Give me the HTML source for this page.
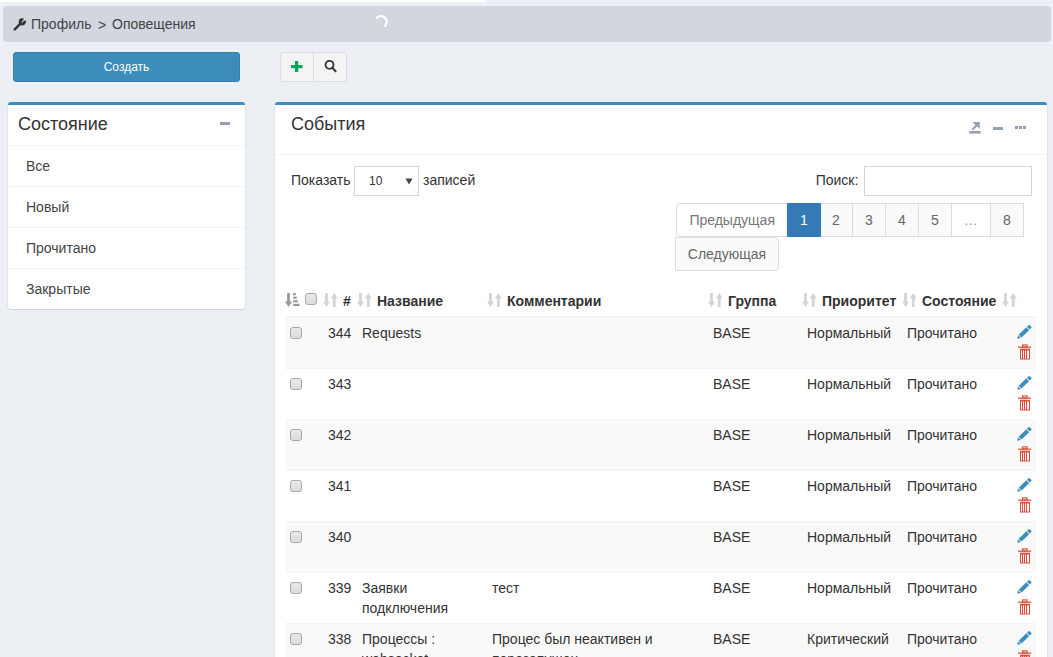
<!DOCTYPE html>
<html><head><meta charset="utf-8">
<style>
*{box-sizing:border-box;margin:0;padding:0}
html,body{width:1053px;height:657px;overflow:hidden;background:#ecf0f5;font-family:"Liberation Sans",sans-serif;font-size:14px;line-height:20px;color:#333}
.abs{position:absolute}
#topbar{left:0;top:0;width:485px;height:2px;background:#fff}
#bc{left:3px;top:6px;width:1048px;height:36px;background:#d2d6de;border-radius:4px}
#bc .t{left:28px;top:9px;color:#444;white-space:pre}
#create{left:13px;top:52px;width:227px;height:30px;background:#3c8dbc;border:1px solid #367fa9;border-radius:3px;color:#fff;font-size:12px;line-height:28px;text-align:center}
#grp{left:280px;top:52px;width:66px;height:30px}
#grp .b{position:absolute;top:0;height:30px;background:#f4f4f4;border:1px solid #ddd}
.box{background:#fff;border-top:3px solid #3c8dbc;border-radius:3px;box-shadow:0 1px 1px rgba(0,0,0,.1),1px 0 1px rgba(0,0,0,.04),-1px 0 1px rgba(0,0,0,.04)}
#lbox{left:8px;top:102px;width:237px;height:207px}
#lbox .hdr{position:absolute;left:0;top:0;width:237px;height:41px;border-bottom:1px solid #f4f4f4}
.ttl{position:absolute;font-size:18px;line-height:20px;color:#333}
#lbox .it{position:absolute;left:0;width:237px;height:41px;border-bottom:1px solid #f4f4f4;color:#444;padding:10px 0 0 18px}
#rbox{left:275px;top:102px;width:772px;height:600px}
.sep{position:absolute;height:1px;background:#f4f4f4}
.pg{position:absolute;top:203px;height:34px;border:1px solid #ddd;background:#fafafa;color:#666;text-align:center;line-height:32px}
th,td{position:absolute}
.row{position:absolute;left:285px;width:751px;height:51px;border-top:1px solid #f4f4f4}
.row.odd{background:#f9f9f9}
.cb{position:absolute;width:12px;height:12px;border:1px solid #a9a9a9;border-radius:3px;background:linear-gradient(#e9e9e9,#dcdcdc)}
.c{position:absolute;white-space:nowrap;color:#333}
.h{position:absolute;font-weight:bold;white-space:nowrap;color:#333}
</style></head><body>
<div id="topbar" class="abs"></div>
<div id="bc" class="abs">
  <svg class="abs" style="left:10px;top:12px" width="13" height="13" viewBox="0 0 13 13"><path d="M1.8 11.3 L7.2 5.9" stroke="#333" stroke-width="2.5" stroke-linecap="round"/><path d="M11.29 2.87 A2.2 2.2 0 1 1 10.23 1.81" stroke="#333" stroke-width="2.9" fill="none"/></svg>
  <div class="abs t" style="left:28px;top:8px">Профиль</div>
  <div class="abs t" style="left:95px;top:9px">&gt;</div>
  <div class="abs t" style="left:109px;top:8px">Оповещения</div>
  <svg class="abs" style="left:369px;top:4px" width="18" height="18" viewBox="0 0 18 18"><path d="M4.9 7.7 A5.8 5.8 0 0 1 13.1 15.9" stroke="#fff" stroke-width="2.2" fill="none" stroke-linecap="round"/></svg>
</div>
<div id="create" class="abs">Создать</div>
<div id="grp" class="abs">
  <div class="b" style="left:0;width:34px;border-radius:3px 0 0 3px"></div>
  <div class="b" style="left:33px;width:34px;border-radius:0 3px 3px 0"></div>
  <svg class="abs" style="left:11px;top:9px" width="12" height="12" viewBox="0 0 12 12"><path d="M0 5.6 H11.5 M5.6 0 V11" stroke="#00a65a" stroke-width="3.2"/></svg>
  <svg class="abs" style="left:43px;top:7px" width="14" height="14" viewBox="0 0 14 14"><circle cx="6.5" cy="5.8" r="4" stroke="#333" stroke-width="1.8" fill="none"/><path d="M9.3 8.8 L12.6 12.2" stroke="#333" stroke-width="2" stroke-linecap="round"/></svg>
</div>

<div id="lbox" class="abs box">
  <div class="hdr"></div>
  <div class="ttl" style="left:10px;top:9px">Состояние</div>
  <div class="abs" style="left:212px;top:17px;width:10px;height:3px;background:#97a0b3"></div>
  <div class="it" style="top:41px">Все</div>
  <div class="it" style="top:82px">Новый</div>
  <div class="it" style="top:123px">Прочитано</div>
  <div class="it" style="top:164px;border-bottom:0">Закрытые</div>
</div>

<div id="rbox" class="abs box">
  <div class="ttl" style="left:16px;top:9px">События</div>
  <svg class="abs" style="left:694px;top:17px" width="12" height="12" viewBox="0 0 12 12"><path d="M3.4 0 H10.8 V6.9 Z" fill="#97a0b3"/><path d="M7.5 3.5 L3.3 7.7" stroke="#97a0b3" stroke-width="2.2"/><rect x="0.3" y="9" width="11.4" height="2.6" fill="#97a0b3"/></svg>
  <div class="abs" style="left:718px;top:22px;width:10px;height:3px;background:#97a0b3"></div>
  <div class="abs" style="left:740px;top:21px;width:3px;height:3px;background:#97a0b3"></div>
  <div class="abs" style="left:744px;top:21px;width:3px;height:3px;background:#97a0b3"></div>
  <div class="abs" style="left:748px;top:21px;width:3px;height:3px;background:#97a0b3"></div>
  <div class="sep" style="left:0;top:49px;width:772px"></div>
</div>
<div class="abs c" style="left:291px;top:170px;color:#333">Показать</div>
<div class="abs" style="left:354px;top:166px;width:65px;height:30px;border:1px solid #d2d6de;background:#fff"></div>
<div class="abs c" style="left:369px;top:171px;font-size:12px">10</div>
<svg class="abs" style="left:405px;top:178px" width="8" height="7" viewBox="0 0 8 7"><path d="M0.5 0.5 H7.5 L4 6.5 Z" fill="#444"/></svg>
<div class="abs c" style="left:423px;top:170px">записей</div>
<div class="abs c" style="left:815.7px;top:170px">Поиск:</div>
<div class="abs" style="left:864px;top:166px;width:168px;height:30px;border:1px solid #d2d6de;background:#fff"></div>

<div class="pg" style="left:676.4px;width:111.6px;border-radius:4px 0 0 4px;background:#fff;color:#777">Предыдущая</div>
<div class="pg" style="left:787px;width:34px;background:#337ab7;border-color:#337ab7;color:#fff;z-index:2">1</div>
<div class="pg" style="left:819px;width:34px">2</div>
<div class="pg" style="left:852px;width:34px">3</div>
<div class="pg" style="left:885px;width:34px">4</div>
<div class="pg" style="left:918px;width:34px">5</div>
<div class="pg" style="left:950.5px;width:40.5px;background:#fff;color:#999">…</div>
<div class="pg" style="left:990px;width:34px">8</div>
<div class="pg" style="left:675px;top:237px;width:104px;border-radius:0 4px 4px 0">Следующая</div>

<svg class="abs" style="left:285px;top:293px" width="15" height="14" viewBox="0 0 15 14"><path d="M2.1 0 H4.9 V8.6 H7 L3.5 14 L0 8.6 H2.1 Z" fill="#999"/><rect x="8.2" y="0" width="2.6" height="2.2" fill="#999"/><rect x="8.2" y="3.6" width="3.6" height="2.2" fill="#999"/><rect x="8.2" y="7.2" width="4.6" height="2.2" fill="#999"/><rect x="8.2" y="10.8" width="6.3" height="2.2" fill="#999"/></svg>
<svg class="abs" style="left:323px;top:293px" width="15" height="14" viewBox="0 0 15 14"><path d="M2.1 0 H4.9 V8.6 H7 L3.5 14 L0 8.6 H2.1 Z M9.9 14 H12.7 V5.4 H14.8 L11.3 0 L7.8 5.4 H9.9 Z" fill="#d4d4d4"/></svg>
<svg class="abs" style="left:357px;top:293px" width="15" height="14" viewBox="0 0 15 14"><path d="M2.1 0 H4.9 V8.6 H7 L3.5 14 L0 8.6 H2.1 Z M9.9 14 H12.7 V5.4 H14.8 L11.3 0 L7.8 5.4 H9.9 Z" fill="#d4d4d4"/></svg>
<svg class="abs" style="left:487px;top:293px" width="15" height="14" viewBox="0 0 15 14"><path d="M2.1 0 H4.9 V8.6 H7 L3.5 14 L0 8.6 H2.1 Z M9.9 14 H12.7 V5.4 H14.8 L11.3 0 L7.8 5.4 H9.9 Z" fill="#d4d4d4"/></svg>
<svg class="abs" style="left:708px;top:293px" width="15" height="14" viewBox="0 0 15 14"><path d="M2.1 0 H4.9 V8.6 H7 L3.5 14 L0 8.6 H2.1 Z M9.9 14 H12.7 V5.4 H14.8 L11.3 0 L7.8 5.4 H9.9 Z" fill="#d4d4d4"/></svg>
<svg class="abs" style="left:802px;top:293px" width="15" height="14" viewBox="0 0 15 14"><path d="M2.1 0 H4.9 V8.6 H7 L3.5 14 L0 8.6 H2.1 Z M9.9 14 H12.7 V5.4 H14.8 L11.3 0 L7.8 5.4 H9.9 Z" fill="#d4d4d4"/></svg>
<svg class="abs" style="left:902px;top:293px" width="15" height="14" viewBox="0 0 15 14"><path d="M2.1 0 H4.9 V8.6 H7 L3.5 14 L0 8.6 H2.1 Z M9.9 14 H12.7 V5.4 H14.8 L11.3 0 L7.8 5.4 H9.9 Z" fill="#d4d4d4"/></svg>
<svg class="abs" style="left:1002px;top:293px" width="15" height="14" viewBox="0 0 15 14"><path d="M2.1 0 H4.9 V8.6 H7 L3.5 14 L0 8.6 H2.1 Z M9.9 14 H12.7 V5.4 H14.8 L11.3 0 L7.8 5.4 H9.9 Z" fill="#d4d4d4"/></svg>
<div class="cb" style="left:305px;top:293px"></div>
<div class="h" style="left:343px;top:291px">#</div>
<div class="h" style="left:377px;top:291px">Название</div>
<div class="h" style="left:507px;top:291px">Комментарии</div>
<div class="h" style="left:728px;top:291px">Группа</div>
<div class="h" style="left:822px;top:291px">Приоритет</div>
<div class="h" style="left:922px;top:291px">Состояние</div>
<div class="abs" style="left:285px;top:316px;width:751px;height:2px;background:#f4f4f4"></div>
<div class="abs" style="left:285px;top:318px;width:751px;height:50px;background:#f9f9f9;"></div>
<div class="cb" style="left:290px;top:327px"></div>
<div class="c" style="left:328px;top:323px">344</div>
<div class="c" style="left:362px;top:323px">Requests</div>
<div class="c" style="left:713px;top:323px">BASE</div>
<div class="c" style="left:807px;top:323px">Нормальный</div>
<div class="c" style="left:907px;top:323px">Прочитано</div>
<svg class="abs" style="left:1017px;top:324px" width="16" height="16" viewBox="0 0 16 16"><g transform="translate(0.3 14.8) rotate(-44)" fill="#3c8dbc"><path d="M0 0 L3.1 -2.0 V2.0 Z"/><rect x="3.9" y="-2.0" width="10.6" height="4.0"/><rect x="15.3" y="-2.0" width="3" height="4.0" rx="0.7"/></g></svg>
<svg class="abs" style="left:1018px;top:344px" width="14" height="16" viewBox="0 0 14 16"><rect x="4.5" y="0.9" width="4.6" height="2" stroke="#dd4b39" stroke-width="1.1" fill="none"/><rect x="0" y="2.6" width="13.2" height="1.2" fill="#dd4b39"/><path d="M2 4.8 H12 V15.4 H2 Z M3 6.4 V14.5 H4 V6.4 Z M5 6.4 V14.5 H6 V6.4 Z M7 6.4 V14.5 H8 V6.4 Z M9 6.4 V14.5 H11 V6.4 Z" fill="#dd4b39" fill-rule="evenodd"/></svg>
<div class="abs" style="left:285px;top:368px;width:751px;height:51px;background:#fff;border-top:1px solid #f4f4f4;"></div>
<div class="cb" style="left:290px;top:378px"></div>
<div class="c" style="left:328px;top:374px">343</div>
<div class="c" style="left:713px;top:374px">BASE</div>
<div class="c" style="left:807px;top:374px">Нормальный</div>
<div class="c" style="left:907px;top:374px">Прочитано</div>
<svg class="abs" style="left:1017px;top:375px" width="16" height="16" viewBox="0 0 16 16"><g transform="translate(0.3 14.8) rotate(-44)" fill="#3c8dbc"><path d="M0 0 L3.1 -2.0 V2.0 Z"/><rect x="3.9" y="-2.0" width="10.6" height="4.0"/><rect x="15.3" y="-2.0" width="3" height="4.0" rx="0.7"/></g></svg>
<svg class="abs" style="left:1018px;top:395px" width="14" height="16" viewBox="0 0 14 16"><rect x="4.5" y="0.9" width="4.6" height="2" stroke="#dd4b39" stroke-width="1.1" fill="none"/><rect x="0" y="2.6" width="13.2" height="1.2" fill="#dd4b39"/><path d="M2 4.8 H12 V15.4 H2 Z M3 6.4 V14.5 H4 V6.4 Z M5 6.4 V14.5 H6 V6.4 Z M7 6.4 V14.5 H8 V6.4 Z M9 6.4 V14.5 H11 V6.4 Z" fill="#dd4b39" fill-rule="evenodd"/></svg>
<div class="abs" style="left:285px;top:419px;width:751px;height:51px;background:#f9f9f9;border-top:1px solid #f4f4f4;"></div>
<div class="cb" style="left:290px;top:429px"></div>
<div class="c" style="left:328px;top:425px">342</div>
<div class="c" style="left:713px;top:425px">BASE</div>
<div class="c" style="left:807px;top:425px">Нормальный</div>
<div class="c" style="left:907px;top:425px">Прочитано</div>
<svg class="abs" style="left:1017px;top:426px" width="16" height="16" viewBox="0 0 16 16"><g transform="translate(0.3 14.8) rotate(-44)" fill="#3c8dbc"><path d="M0 0 L3.1 -2.0 V2.0 Z"/><rect x="3.9" y="-2.0" width="10.6" height="4.0"/><rect x="15.3" y="-2.0" width="3" height="4.0" rx="0.7"/></g></svg>
<svg class="abs" style="left:1018px;top:446px" width="14" height="16" viewBox="0 0 14 16"><rect x="4.5" y="0.9" width="4.6" height="2" stroke="#dd4b39" stroke-width="1.1" fill="none"/><rect x="0" y="2.6" width="13.2" height="1.2" fill="#dd4b39"/><path d="M2 4.8 H12 V15.4 H2 Z M3 6.4 V14.5 H4 V6.4 Z M5 6.4 V14.5 H6 V6.4 Z M7 6.4 V14.5 H8 V6.4 Z M9 6.4 V14.5 H11 V6.4 Z" fill="#dd4b39" fill-rule="evenodd"/></svg>
<div class="abs" style="left:285px;top:470px;width:751px;height:51px;background:#fff;border-top:1px solid #f4f4f4;"></div>
<div class="cb" style="left:290px;top:480px"></div>
<div class="c" style="left:328px;top:476px">341</div>
<div class="c" style="left:713px;top:476px">BASE</div>
<div class="c" style="left:807px;top:476px">Нормальный</div>
<div class="c" style="left:907px;top:476px">Прочитано</div>
<svg class="abs" style="left:1017px;top:477px" width="16" height="16" viewBox="0 0 16 16"><g transform="translate(0.3 14.8) rotate(-44)" fill="#3c8dbc"><path d="M0 0 L3.1 -2.0 V2.0 Z"/><rect x="3.9" y="-2.0" width="10.6" height="4.0"/><rect x="15.3" y="-2.0" width="3" height="4.0" rx="0.7"/></g></svg>
<svg class="abs" style="left:1018px;top:497px" width="14" height="16" viewBox="0 0 14 16"><rect x="4.5" y="0.9" width="4.6" height="2" stroke="#dd4b39" stroke-width="1.1" fill="none"/><rect x="0" y="2.6" width="13.2" height="1.2" fill="#dd4b39"/><path d="M2 4.8 H12 V15.4 H2 Z M3 6.4 V14.5 H4 V6.4 Z M5 6.4 V14.5 H6 V6.4 Z M7 6.4 V14.5 H8 V6.4 Z M9 6.4 V14.5 H11 V6.4 Z" fill="#dd4b39" fill-rule="evenodd"/></svg>
<div class="abs" style="left:285px;top:521px;width:751px;height:51px;background:#f9f9f9;border-top:1px solid #f4f4f4;"></div>
<div class="cb" style="left:290px;top:531px"></div>
<div class="c" style="left:328px;top:527px">340</div>
<div class="c" style="left:713px;top:527px">BASE</div>
<div class="c" style="left:807px;top:527px">Нормальный</div>
<div class="c" style="left:907px;top:527px">Прочитано</div>
<svg class="abs" style="left:1017px;top:528px" width="16" height="16" viewBox="0 0 16 16"><g transform="translate(0.3 14.8) rotate(-44)" fill="#3c8dbc"><path d="M0 0 L3.1 -2.0 V2.0 Z"/><rect x="3.9" y="-2.0" width="10.6" height="4.0"/><rect x="15.3" y="-2.0" width="3" height="4.0" rx="0.7"/></g></svg>
<svg class="abs" style="left:1018px;top:548px" width="14" height="16" viewBox="0 0 14 16"><rect x="4.5" y="0.9" width="4.6" height="2" stroke="#dd4b39" stroke-width="1.1" fill="none"/><rect x="0" y="2.6" width="13.2" height="1.2" fill="#dd4b39"/><path d="M2 4.8 H12 V15.4 H2 Z M3 6.4 V14.5 H4 V6.4 Z M5 6.4 V14.5 H6 V6.4 Z M7 6.4 V14.5 H8 V6.4 Z M9 6.4 V14.5 H11 V6.4 Z" fill="#dd4b39" fill-rule="evenodd"/></svg>
<div class="abs" style="left:285px;top:572px;width:751px;height:51px;background:#fff;border-top:1px solid #f4f4f4;"></div>
<div class="cb" style="left:290px;top:582px"></div>
<div class="c" style="left:328px;top:578px">339</div>
<div class="c" style="left:362px;top:578px">Заявки<br>подключения</div>
<div class="c" style="left:492px;top:578px">тест</div>
<div class="c" style="left:713px;top:578px">BASE</div>
<div class="c" style="left:807px;top:578px">Нормальный</div>
<div class="c" style="left:907px;top:578px">Прочитано</div>
<svg class="abs" style="left:1017px;top:579px" width="16" height="16" viewBox="0 0 16 16"><g transform="translate(0.3 14.8) rotate(-44)" fill="#3c8dbc"><path d="M0 0 L3.1 -2.0 V2.0 Z"/><rect x="3.9" y="-2.0" width="10.6" height="4.0"/><rect x="15.3" y="-2.0" width="3" height="4.0" rx="0.7"/></g></svg>
<svg class="abs" style="left:1018px;top:599px" width="14" height="16" viewBox="0 0 14 16"><rect x="4.5" y="0.9" width="4.6" height="2" stroke="#dd4b39" stroke-width="1.1" fill="none"/><rect x="0" y="2.6" width="13.2" height="1.2" fill="#dd4b39"/><path d="M2 4.8 H12 V15.4 H2 Z M3 6.4 V14.5 H4 V6.4 Z M5 6.4 V14.5 H6 V6.4 Z M7 6.4 V14.5 H8 V6.4 Z M9 6.4 V14.5 H11 V6.4 Z" fill="#dd4b39" fill-rule="evenodd"/></svg>
<div class="abs" style="left:285px;top:623px;width:751px;height:51px;background:#f9f9f9;border-top:1px solid #f4f4f4;"></div>
<div class="cb" style="left:290px;top:633px"></div>
<div class="c" style="left:328px;top:629px">338</div>
<div class="c" style="left:362px;top:629px">Процессы :<br>websocket</div>
<div class="c" style="left:492px;top:629px">Процес был неактивен и<br>перезапущен</div>
<div class="c" style="left:713px;top:629px">BASE</div>
<div class="c" style="left:807px;top:629px">Критический</div>
<div class="c" style="left:907px;top:629px">Прочитано</div>
<svg class="abs" style="left:1017px;top:630px" width="16" height="16" viewBox="0 0 16 16"><g transform="translate(0.3 14.8) rotate(-44)" fill="#3c8dbc"><path d="M0 0 L3.1 -2.0 V2.0 Z"/><rect x="3.9" y="-2.0" width="10.6" height="4.0"/><rect x="15.3" y="-2.0" width="3" height="4.0" rx="0.7"/></g></svg>
<svg class="abs" style="left:1018px;top:650px" width="14" height="16" viewBox="0 0 14 16"><rect x="4.5" y="0.9" width="4.6" height="2" stroke="#dd4b39" stroke-width="1.1" fill="none"/><rect x="0" y="2.6" width="13.2" height="1.2" fill="#dd4b39"/><path d="M2 4.8 H12 V15.4 H2 Z M3 6.4 V14.5 H4 V6.4 Z M5 6.4 V14.5 H6 V6.4 Z M7 6.4 V14.5 H8 V6.4 Z M9 6.4 V14.5 H11 V6.4 Z" fill="#dd4b39" fill-rule="evenodd"/></svg>
</body></html>
